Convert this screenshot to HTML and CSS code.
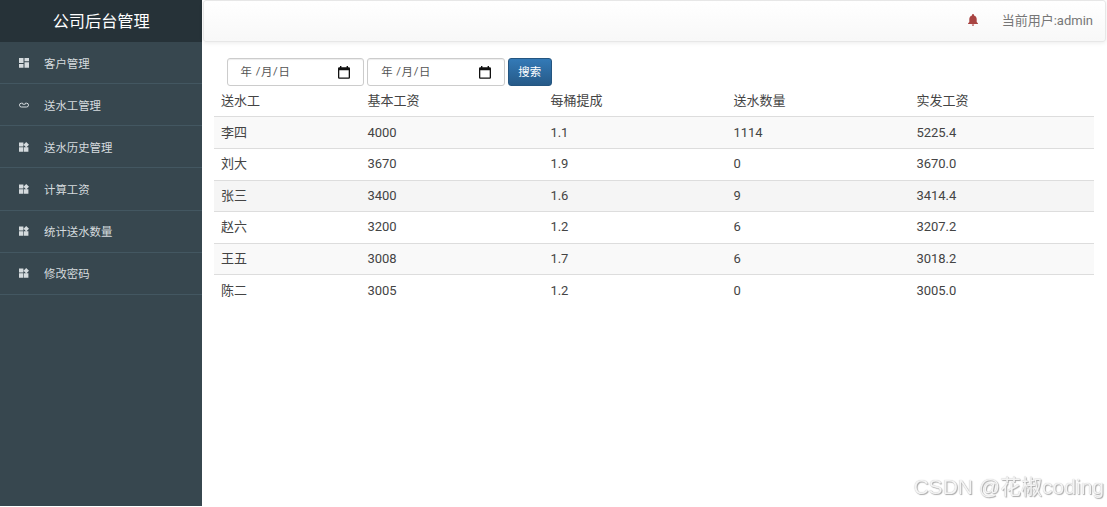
FILE: index.html
```html
<!DOCTYPE html>
<html lang="zh-CN">
<head>
    <meta charset="UTF-8">
    <meta name="viewport" content="width=device-width, initial-scale=1.0">
    <title>公司后台管理</title>
    <link rel="stylesheet" href="styles.css">
</head>
<body>
    <!-- 图标 -->
    <svg class="icon-defs" width="0" height="0">
        <symbol id="icon-dashboard" viewBox="0 0 10 10">
            <path d="M0 0h4.5v5H0zM0 6h4.5v3.7H0zM5.5 0H10v3.2H5.5zM5.5 4.2H10v5.5H5.5z"/>
        </symbol>
        <symbol id="icon-link" viewBox="0 0 10 10">
            <path d="M3.6 3.2H2.4a1.9 1.9 0 0 0 0 3.8h5.2a1.9 1.9 0 0 0 0-3.8H6.4M3 3.6q2 1.6 4 0" fill="none" stroke="currentColor" stroke-width="1"/>
        </symbol>
        <symbol id="icon-widgets" viewBox="0 0 10 10">
            <path d="M0 .4h4.4v4.2H0zM0 5.2h4.4v4.5H0zM5 5.2h4.4v4.5H5zM7.2 0L10 2.7 7.2 5.4 4.5 2.7z"/>
        </symbol>
    </svg>

    <div class="sidebar">
        <div class="brand">公司后台管理</div>
        <ul class="menu">
            <li><svg class="icon"><use href="#icon-dashboard"/></svg>客户管理</li>
            <li><svg class="icon"><use href="#icon-link"/></svg>送水工管理</li>
            <li><svg class="icon"><use href="#icon-widgets"/></svg>送水历史管理</li>
            <li><svg class="icon"><use href="#icon-widgets"/></svg>计算工资</li>
            <li><svg class="icon"><use href="#icon-widgets"/></svg>统计送水数量</li>
            <li><svg class="icon"><use href="#icon-widgets"/></svg>修改密码</li>
        </ul>
    </div>

    <div class="main">
        <div class="navbar">
            <svg class="bell" viewBox="0 0 10 12"><path d="M5 0a1 1 0 0 1 1 1v.4C7.9 1.9 8.7 3.4 8.7 5v3L10 9.4v.6H0v-.6L1.3 8V5C1.3 3.4 2.1 1.9 4 1.4V1a1 1 0 0 1 1-1zM3.8 10.5h2.4a1.2 1.2 0 0 1-2.4 0z"/></svg>
            <span class="user">当前用户:admin</span>
        </div>

        <div class="content">
            <div class="search">
                <div class="date">
                    <span class="year">年</span><span class="sep">/</span><span>月</span><span class="sep">/</span><span>日</span>
                    <svg class="calendar" viewBox="0 0 12 13"><path d="M2 0h1.4v1.2h5.2V0H10v1.2h.8A1.2 1.2 0 0 1 12 2.4v9.2a1.2 1.2 0 0 1-1.2 1.2H1.2A1.2 1.2 0 0 1 0 11.6V2.4a1.2 1.2 0 0 1 1.2-1.2H2zM1.3 4.2v7.3h9.4V4.2z"/></svg>
                </div>
                <div class="date">
                    <span class="year">年</span><span class="sep">/</span><span>月</span><span class="sep">/</span><span>日</span>
                    <svg class="calendar" viewBox="0 0 12 13"><path d="M2 0h1.4v1.2h5.2V0H10v1.2h.8A1.2 1.2 0 0 1 12 2.4v9.2a1.2 1.2 0 0 1-1.2 1.2H1.2A1.2 1.2 0 0 1 0 11.6V2.4a1.2 1.2 0 0 1 1.2-1.2H2zM1.3 4.2v7.3h9.4V4.2z"/></svg>
                </div>
                <button class="btn">搜索</button>
            </div>

            <table class="table">
                <colgroup>
                    <col class="col-name"><col class="col-num"><col class="col-num"><col class="col-num"><col>
                </colgroup>
                <thead>
                    <tr><th>送水工</th><th>基本工资</th><th>每桶提成</th><th>送水数量</th><th>实发工资</th></tr>
                </thead>
                <tbody>
                    <tr><td>李四</td><td>4000</td><td>1.1</td><td>1114</td><td>5225.4</td></tr>
                    <tr><td>刘大</td><td>3670</td><td>1.9</td><td>0</td><td>3670.0</td></tr>
                    <tr class="active"><td>张三</td><td>3400</td><td>1.6</td><td>9</td><td>3414.4</td></tr>
                    <tr><td>赵六</td><td>3200</td><td>1.2</td><td>6</td><td>3207.2</td></tr>
                    <tr><td>王五</td><td>3008</td><td>1.7</td><td>6</td><td>3018.2</td></tr>
                    <tr><td>陈二</td><td>3005</td><td>1.2</td><td>0</td><td>3005.0</td></tr>
                </tbody>
            </table>
        </div>
    </div>

    <div class="watermark">CSDN @花椒coding</div>
</body>
</html>
```
FILE: styles.css
```css
* {
    box-sizing: border-box;
}
body {
    margin: 0;
    height: 100vh;
    display: flex;
    overflow: hidden;
    background: #fff;
    color: #444;
    font-family: Roboto, "Noto Sans CJK SC", sans-serif;
    font-size: 13px;
}
.icon-defs {
    position: absolute;
}
/* 左侧菜单 */
.sidebar {
    width: 202.4px;
    height: 506px;
    flex: none;
    background: #37474f;
}
.brand {
    height: 42px;
    line-height: 43px;
    background: #263238;
    color: #fff;
    font-size: 16.2px;
    text-align: center;
}
.menu {
    list-style: none;
    margin: 0;
    padding: 0;
}
.menu li {
    display: flex;
    align-items: center;
    height: 42.15px;
    padding-left: 19px;
    border-bottom: 1px solid #435761;
    color: #d5dbde;
    font-size: 11.4px;
}
.icon {
    width: 10px;
    height: 10px;
    margin-right: 15px;
    fill: currentColor;
}
/* 右侧内容 */
.main {
    flex: 1;
}
.navbar {
    display: flex;
    align-items: center;
    justify-content: flex-end;
    height: 42px;
    margin-left: 0.6px;
    margin-right: 1px;
    padding-right: 12px;
    border: 1px solid #e7e7e7;
    border-radius: 3px;
    background: linear-gradient(#fff, #f8f8f8);
    box-shadow: 0 1px 4px rgba(0, 0, 0, .08);
    color: #777;
}
.user {
    padding-bottom: 3px;
}
.bell {
    width: 10px;
    height: 12px;
    margin-right: 24px;
    margin-bottom: 2px;
    fill: #a94442;
}
.content {
    padding: 16px 13px 0 12px;
}
.search {
    display: flex;
    gap: 3px;
    padding-left: 12.2px;
}
.date {
    display: flex;
    align-items: center;
    width: 137.6px;
    height: 28px;
    padding: 0 13px;
    border: 1px solid #ccc;
    border-radius: 3px;
    box-shadow: inset 0 1px 1px rgba(0, 0, 0, .075);
    color: #555;
    font-size: 11.4px;
}
.date span {
    padding-bottom: 2px;
}
.year {
    margin-right: 3px;
}
.sep {
    width: 6px;
    text-align: center;
}
.calendar {
    width: 12px;
    height: 13px;
    margin-left: auto;
    fill: #111;
}
.btn {
    width: 44px;
    height: 28px;
    padding: 0 0 2px;
    border: 1px solid #245580;
    border-radius: 3px;
    background: linear-gradient(#337ab7, #265a88);
    color: #fff;
    font-family: inherit;
    font-size: 11.4px;
}
.table {
    width: 100%;
    table-layout: fixed;
    border-collapse: separate;
    border-spacing: 0;
}
.col-name {
    width: 146.5px;
}
.col-num {
    width: 183px;
}
.table th,
.table td {
    height: 31.6px;
    padding: 0 6.5px;
    text-align: left;
    font-weight: normal;
    line-height: 18px;
}
.table th {
    height: 30.4px;
}
.table td {
    border-top: 1px solid #ddd;
}
.table tbody tr:nth-child(odd) {
    background: #f9f9f9;
}
.table tbody tr.active {
    background: #f5f5f5;
}
.watermark {
    position: fixed;
    right: 3px;
    bottom: 6px;
    color: #f4f4f4;
    font-family: "Liberation Sans", "Noto Sans CJK SC", sans-serif;
    font-size: 21px;
    line-height: 28px;
    text-shadow: 1px 1px 1px #aaa, 0 0 1px #bbb;
}
```
